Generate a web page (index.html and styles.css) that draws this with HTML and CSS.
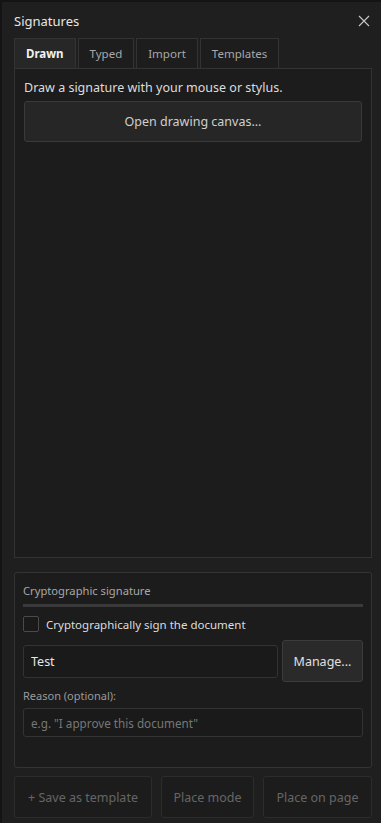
FILE: index.html
```html
<!DOCTYPE html>
<html lang="en">
<head>
    <meta charset="UTF-8">
    <meta name="viewport" content="width=device-width, initial-scale=1.0">
    <title>Signatures</title>
    <link rel="stylesheet" href="styles.css">
</head>
<body>
    <div class="panel">
        <div class="header">
            <span class="title">Signatures</span>
            <button class="close" type="button" aria-label="Close">
                <svg width="12" height="12" viewBox="0 0 12 12">
                    <path d="M1 1 L11 11 M11 1 L1 11" stroke="#c8c8c8" stroke-width="1.1" fill="none"/>
                </svg>
            </button>
        </div>

        <div class="tabs">
            <div class="tab active">Drawn</div>
            <div class="tab">Typed</div>
            <div class="tab">Import</div>
            <div class="tab">Templates</div>
        </div>

        <div class="tab-pane">
            <p class="hint">Draw a signature with your mouse or stylus.</p>
            <button type="button" class="wide-button">Open drawing canvas...</button>
        </div>

        <div class="group">
            <div class="group-title">Cryptographic signature</div>
            <div class="separator"></div>
            <label class="check-row">
                <span class="checkbox"></span>
                Cryptographically sign the document
            </label>
            <div class="cert-row">
                <input type="text" class="field cert-field" value="Test">
                <button type="button" class="manage">Manage...</button>
            </div>
            <div class="small-label">Reason (optional):</div>
            <input type="text" class="field reason-field" placeholder="e.g. &quot;I approve this document&quot;">
        </div>

        <div class="actions">
            <button type="button" class="action save" disabled>+ Save as template</button>
            <button type="button" class="action mode" disabled>Place mode</button>
            <button type="button" class="action place" disabled>Place on page</button>
        </div>
    </div>
</body>
</html>
```

FILE: styles.css
```css
body {
    margin: 0;
    padding: 0;
    background-color: #141414;
    font-family: 'Noto Sans', 'Open Sans', sans-serif;
    font-size: 12px;
    color: #dcdcdc;
}

.panel {
    box-sizing: border-box;
    height: 823px;
    margin: 2px 0 0 2px;
    padding: 0 9px 0 12px;
    background-color: #1f1f1f;
    display: flex;
    flex-direction: column;
}

.header {
    display: flex;
    justify-content: space-between;
    align-items: center;
    height: 36px;
    padding-top: 1px;
    box-sizing: border-box;
}

.title {
    font-size: 13px;
    color: #e6e6e6;
}

.close {
    background: none;
    border: none;
    padding: 0;
    margin-right: 1px;
    width: 14px;
    height: 14px;
    display: flex;
    align-items: center;
    justify-content: center;
    cursor: pointer;
}

/* tabs */
.tabs {
    display: flex;
    gap: 2px;
    height: 30px;
}

.tab {
    box-sizing: border-box;
    height: 30px;
    padding: 0 11px;
    display: flex;
    align-items: center;
    border: 1px solid #333;
    border-bottom: none;
    color: #a8a8a8;
    font-size: 11.5px;
    background-color: #1d1d1d;
}

.tab.active {
    background-color: #272727;
    color: #f2f2f2;
    font-weight: bold;
    padding: 0 11px;
}

.tab-pane {
    flex: 0 0 490px;
    box-sizing: border-box;
    border: 1px solid #333;
    background-color: #1c1c1c;
    padding: 10px 9px;
}

.hint {
    margin: 0 0 5px;
    font-size: 12.5px;
    color: #dcdcdc;
}

.wide-button {
    width: 100%;
    height: 41px;
    background-color: #262626;
    border: 1px solid #3a3a3a;
    border-radius: 3px;
    color: #cfcfcf;
    font-family: inherit;
    font-size: 12.5px;
}

/* crypto group */
.group {
    margin-top: 14px;
    box-sizing: border-box;
    height: 196px;
    border: 1px solid #333;
    border-radius: 3px;
    background-color: #1c1c1c;
    padding: 10px 8px 0 8px;
}

.group-title {
    color: #a8a8a8;
    font-size: 11.2px;
    line-height: 16px;
}

.separator {
    height: 3px;
    background-color: #3a3a3a;
    margin: 5px 0 8px;
}

.check-row {
    display: flex;
    align-items: center;
    gap: 7px;
    color: #dcdcdc;
    font-size: 11.5px;
    height: 18px;
}

.checkbox {
    box-sizing: border-box;
    width: 16px;
    height: 16px;
    border: 1px solid #4a4a4a;
    border-radius: 2px;
    background-color: #1a1a1a;
}

.cert-row {
    display: flex;
    align-items: center;
    gap: 4px;
    margin-top: 7px;
}

.field {
    box-sizing: border-box;
    height: 33px;
    background-color: #1a1a1a;
    border: 1px solid #333;
    border-radius: 3px;
    padding: 0 7px;
    color: #e6e6e6;
    font-family: inherit;
    font-size: 12.5px;
    outline: none;
}

.field::placeholder {
    color: #777;
}

.cert-field {
    flex: 0 0 255px;
}

.manage {
    flex: 1;
    height: 42px;
    background-color: #2a2a2a;
    border: 1px solid #3c3c3c;
    border-radius: 3px;
    color: #e0e0e0;
    font-family: inherit;
    font-size: 12.5px;
}

.small-label {
    margin-top: 7px;
    color: #9a9a9a;
    font-size: 11px;
    line-height: 14px;
}

.reason-field {
    width: 100%;
    height: 29px;
    margin-top: 5px;
    font-size: 11.7px;
}

/* bottom buttons */
.actions {
    display: flex;
    gap: 9px;
    margin-top: 8px;
}

.action {
    height: 42px;
    background-color: #1c1c1c;
    border: 1px solid #2c2c2c;
    border-radius: 3px;
    color: #666;
    font-family: inherit;
    font-size: 12.5px;
}

.save {
    width: 138px;
}

.mode {
    width: 93px;
}

.place {
    flex: 1;
}
```
